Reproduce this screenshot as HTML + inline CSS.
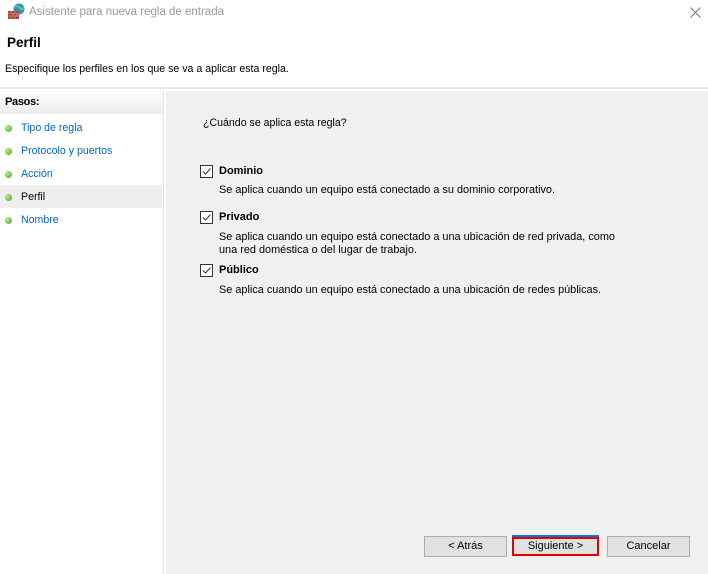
<!DOCTYPE html>
<html><head><meta charset="utf-8"><style>
body{margin:0;width:708px;height:574px;position:relative;background:#fff;font-family:"Liberation Sans",sans-serif;font-size:11px;color:#000;overflow:hidden}
.a{position:absolute;white-space:nowrap}
.l{color:#0066cc}
.dot{position:absolute;left:5px;width:7px;height:7px;border-radius:50%;background:radial-gradient(circle at 35% 35%,#b9f08a,#3ba21f)}
.cb{position:absolute;width:11px;height:11px;border:1px solid #333;background:#fff}
.cb svg{position:absolute;left:0;top:0}
.btn{position:absolute;top:536px;height:19px;border:1px solid #adadad;background:#e1e1e1;text-align:center;line-height:19px}
</style></head><body>
<svg class="a" style="left:7px;top:3px" width="19" height="17" viewBox="0 0 19 17">
<circle cx="12" cy="6" r="5.5" fill="#2a8fd8"/><path d="M8 4q3-2 5 1t3-1" stroke="#6c6" stroke-width="2" fill="none"/>
<rect x="1" y="8" width="11" height="8" fill="#a2473a"/>
<path d="M1 10.5h11M1 13h11M4 8v2.5M8 8v2.5M6 10.5v2.5M10 10.5v2.5M4 13v3M8 13v3" stroke="#d99080" stroke-width="0.7"/>
</svg>
<div class="a" style="left:29px;top:6px;color:#999;font-size:11.5px">Asistente para nueva regla de entrada</div>
<svg class="a" style="left:690px;top:7px" width="11" height="11"><path d="M0.5 0.5L10.5 10.5M10.5 0.5L0.5 10.5" stroke="#777" stroke-width="1"/></svg>
<div class="a" style="left:7px;top:35px;font-weight:bold;font-size:13.5px">Perfil</div>
<div class="a" style="left:5px;top:63px;font-size:10.6px">Especifique los perfiles en los que se va a aplicar esta regla.</div>
<div class="a" style="left:0;top:87px;width:708px;height:2px;background:#e8e8e8"></div>
<div class="a" style="left:0;top:91px;width:163px;height:483px;border-right:1px solid #e3e3e3;background:#fff"></div>
<div class="a" style="left:0;top:91px;width:163px;height:23px;background:linear-gradient(#fff,#ececec)"></div>
<div class="a" style="left:5px;top:96px;font-weight:bold;letter-spacing:-0.3px">Pasos:</div>
<div class="a" style="left:0;top:185px;width:162px;height:23px;background:#efefef"></div>
<div class="dot" style="top:125px"></div><div class="a l" style="left:21px;top:122px;font-size:10.6px">Tipo de regla</div>
<div class="dot" style="top:148px"></div><div class="a l" style="left:21px;top:145px;font-size:10.6px">Protocolo y puertos</div>
<div class="dot" style="top:171px"></div><div class="a l" style="left:21px;top:168px;font-size:10.6px">Acción</div>
<div class="dot" style="top:194px"></div><div class="a" style="left:21px;top:191px;font-size:10.6px">Perfil</div>
<div class="dot" style="top:217px"></div><div class="a l" style="left:21px;top:214px;font-size:10.6px">Nombre</div>
<div class="a" style="left:166px;top:91px;width:542px;height:483px;background:#f0f0f0"></div>
<div class="a" style="left:203px;top:117px;font-size:10.6px">¿Cuándo se aplica esta regla?</div>
<div class="cb" style="left:200px;top:165px"><svg width="11" height="11"><path d="M2 5.5L4.5 8L9.5 2.5" stroke="#333" fill="none"/></svg></div>
<div class="a" style="left:219px;top:165px;font-weight:bold">Dominio</div>
<div class="a" style="left:219px;top:184px;font-size:10.9px">Se aplica cuando un equipo está conectado a su dominio corporativo.</div>
<div class="cb" style="left:200px;top:211px"><svg width="11" height="11"><path d="M2 5.5L4.5 8L9.5 2.5" stroke="#333" fill="none"/></svg></div>
<div class="a" style="left:219px;top:211px;font-weight:bold">Privado</div>
<div class="a" style="left:219px;top:231px;font-size:10.9px">Se aplica cuando un equipo está conectado a una ubicación de red privada, como</div>
<div class="a" style="left:219px;top:244px;font-size:10.9px">una red doméstica o del lugar de trabajo.</div>
<div class="cb" style="left:200px;top:264px"><svg width="11" height="11"><path d="M2 5.5L4.5 8L9.5 2.5" stroke="#333" fill="none"/></svg></div>
<div class="a" style="left:219px;top:264px;font-weight:bold">Público</div>
<div class="a" style="left:219px;top:284px;font-size:10.9px">Se aplica cuando un equipo está conectado a una ubicación de redes públicas.</div>
<div class="btn" style="left:424px;width:81px">&lt; Atrás</div>
<div class="a" style="left:512px;top:535px;width:87px;height:2px;background:#0078d7"></div>
<div class="btn" style="left:512px;top:537px;width:83px;height:15px;line-height:15px;border:2px solid #e00000;background:#e1e1e1">Siguiente &gt;</div>
<div class="btn" style="left:607px;width:81px">Cancelar</div>
</body></html>
